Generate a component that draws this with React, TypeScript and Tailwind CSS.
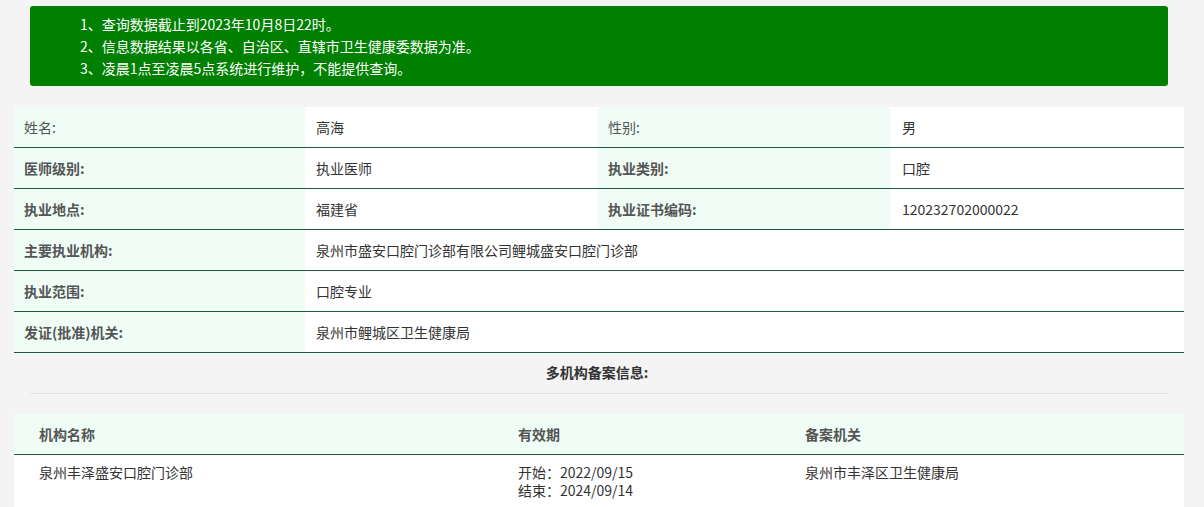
import React from 'react'

const font = { fontFamily: '"Noto Sans CJK SC", "Noto Sans", sans-serif' }

interface Row {
  label: string
  value: string
  label2?: string
  value2?: string
  light?: boolean
}

const rows: Row[] = [
  { label: '姓名:', value: '高海', label2: '性别:', value2: '男', light: true },
  { label: '医师级别:', value: '执业医师', label2: '执业类别:', value2: '口腔' },
  { label: '执业地点:', value: '福建省', label2: '执业证书编码:', value2: '120232702000022' },
  { label: '主要执业机构:', value: '泉州市盛安口腔门诊部有限公司鲤城盛安口腔门诊部' },
  { label: '执业范围:', value: '口腔专业' },
  { label: '发证(批准)机关:', value: '泉州市鲤城区卫生健康局' },
]

export default function App() {
  return (
    <div className="min-h-screen bg-[#f4f4f4] pt-[6px] text-[14px]" style={font}>
      <div className="ml-[30px] w-[1138px] h-[80px] rounded-[3px] bg-[#008000] pl-[50px] pt-[7px] text-white leading-[22px]">
        <p>1、查询数据截止到2023年10月8日22时。</p>
        <p>2、信息数据结果以各省、自治区、直辖市卫生健康委数据为准。</p>
        <p>3、凌晨1点至凌晨5点系统进行维护，不能提供查询。</p>
      </div>

      <div className="ml-[14px] mt-[21px] w-[1170px]">
        {rows.map(r => (
          <div key={r.label} className="grid grid-cols-[291px_293px_292px_294px] h-[41px] border-b border-[#1d5943]">
            <div className={`bg-[#effdf6] pl-[10px] flex items-center text-[#555] ${r.light ? '' : 'font-bold'}`}>
              {r.label}
            </div>
            {r.label2 ? (
              <>
                <div className="bg-white pl-[11px] flex items-center text-[#333]">{r.value}</div>
                <div className={`bg-[#effdf6] pl-[10px] flex items-center text-[#555] ${r.light ? '' : 'font-bold'}`}>
                  {r.label2}
                </div>
                <div className="bg-white pl-[12px] flex items-center text-[#333]">{r.value2}</div>
              </>
            ) : (
              <div className="col-span-3 bg-white pl-[11px] flex items-center text-[#333]">{r.value}</div>
            )}
          </div>
        ))}
      </div>

      <div className="h-[40px] pb-[2px] pr-[10px] flex items-center justify-center font-bold text-[#333]">多机构备案信息:</div>
      <div className="ml-[30px] w-[1138px] border-t border-[#e4e4e4]" />

      <div className="ml-[14px] mt-[20px] w-[1170px]">
        <div className="grid grid-cols-[479px_287px_404px] h-[41px] bg-[#effdf6] border-b border-[#1d5943] font-bold text-[#555]">
          <div className="pl-[25px] flex items-center">机构名称</div>
          <div className="pl-[25px] flex items-center">有效期</div>
          <div className="pl-[25px] flex items-center">备案机关</div>
        </div>
        <div className="grid grid-cols-[479px_287px_404px] bg-white text-[#333] pt-[8px] pb-[12px] leading-[18px]">
          <div className="pl-[25px]">泉州丰泽盛安口腔门诊部</div>
          <div className="pl-[25px]">
            <div>开始：2022/09/15</div>
            <div>结束：2024/09/14</div>
          </div>
          <div className="pl-[25px]">泉州市丰泽区卫生健康局</div>
        </div>
      </div>
    </div>
  )
}
